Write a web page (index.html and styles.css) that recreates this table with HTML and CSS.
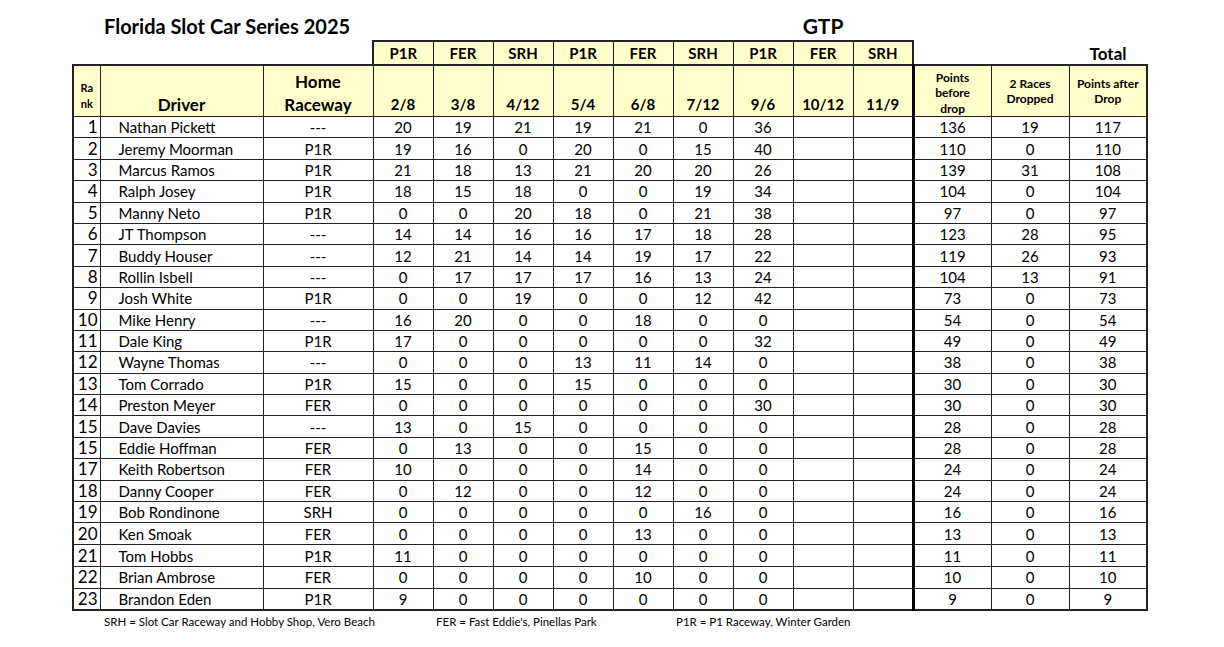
FILE: index.html
```html
<!DOCTYPE html>
<html>
<head>
<meta charset="utf-8">
<title>Florida Slot Car Series 2025</title>
<link rel="stylesheet" href="styles.css">
</head>
<body>
<table class="sheet">
  <colgroup>
    <col class="c-rank"><col class="c-driver"><col class="c-home">
    <col class="c-race"><col class="c-race"><col class="c-race"><col class="c-race"><col class="c-race"><col class="c-race"><col class="c-race"><col class="c-race"><col class="c-race">
    <col class="c-tot"><col class="c-tot"><col class="c-tot">
  </colgroup>
  <tr class="title-row">
    <td></td>
    <td colspan="9" class="title">Florida Slot Car Series 2025</td>
    <td class="gtp">GTP</td>
    <td colspan="4"></td>
  </tr>
  <tr class="track-row">
    <td></td><td></td><td></td>
    <th class="trk first">P1R</th><th class="trk">FER</th><th class="trk">SRH</th><th class="trk">P1R</th><th class="trk">FER</th><th class="trk">SRH</th><th class="trk">P1R</th><th class="trk">FER</th><th class="trk last">SRH</th>
    <td></td><td></td><td class="total">Total</td>
  </tr>
  <tr class="head-row">
    <th class="h rank-h left">Ra<br>nk</th>
    <th class="h driver-h">Driver</th>
    <th class="h home-h">Home<br>Raceway</th>
    <th class="h date">2/8</th><th class="h date">3/8</th><th class="h date">4/12</th><th class="h date">5/4</th><th class="h date">6/8</th><th class="h date">7/12</th><th class="h date">9/6</th><th class="h date">10/12</th><th class="h date sep">11/9</th>
    <th class="h small sepl">Points<br>before<br>drop</th>
    <th class="h small mid">2 Races<br>Dropped</th>
    <th class="h small mid right">Points after<br>Drop</th>
  </tr>
  <tr class="r"><td class="rank left">1</td><td class="name">Nathan Pickett</td><td>---</td><td>20</td><td>19</td><td>21</td><td>19</td><td>21</td><td>0</td><td>36</td><td></td><td class="sep"></td><td class="sepl">136</td><td>19</td><td class="right">117</td></tr>
  <tr class="r"><td class="rank left">2</td><td class="name">Jeremy Moorman</td><td>P1R</td><td>19</td><td>16</td><td>0</td><td>20</td><td>0</td><td>15</td><td>40</td><td></td><td class="sep"></td><td class="sepl">110</td><td>0</td><td class="right">110</td></tr>
  <tr class="r"><td class="rank left">3</td><td class="name">Marcus Ramos</td><td>P1R</td><td>21</td><td>18</td><td>13</td><td>21</td><td>20</td><td>20</td><td>26</td><td></td><td class="sep"></td><td class="sepl">139</td><td>31</td><td class="right">108</td></tr>
  <tr class="r"><td class="rank left">4</td><td class="name">Ralph Josey</td><td>P1R</td><td>18</td><td>15</td><td>18</td><td>0</td><td>0</td><td>19</td><td>34</td><td></td><td class="sep"></td><td class="sepl">104</td><td>0</td><td class="right">104</td></tr>
  <tr class="r"><td class="rank left">5</td><td class="name">Manny Neto</td><td>P1R</td><td>0</td><td>0</td><td>20</td><td>18</td><td>0</td><td>21</td><td>38</td><td></td><td class="sep"></td><td class="sepl">97</td><td>0</td><td class="right">97</td></tr>
  <tr class="r"><td class="rank left">6</td><td class="name">JT Thompson</td><td>---</td><td>14</td><td>14</td><td>16</td><td>16</td><td>17</td><td>18</td><td>28</td><td></td><td class="sep"></td><td class="sepl">123</td><td>28</td><td class="right">95</td></tr>
  <tr class="r"><td class="rank left">7</td><td class="name">Buddy Houser</td><td>---</td><td>12</td><td>21</td><td>14</td><td>14</td><td>19</td><td>17</td><td>22</td><td></td><td class="sep"></td><td class="sepl">119</td><td>26</td><td class="right">93</td></tr>
  <tr class="r"><td class="rank left">8</td><td class="name">Rollin Isbell</td><td>---</td><td>0</td><td>17</td><td>17</td><td>17</td><td>16</td><td>13</td><td>24</td><td></td><td class="sep"></td><td class="sepl">104</td><td>13</td><td class="right">91</td></tr>
  <tr class="r"><td class="rank left">9</td><td class="name">Josh White</td><td>P1R</td><td>0</td><td>0</td><td>19</td><td>0</td><td>0</td><td>12</td><td>42</td><td></td><td class="sep"></td><td class="sepl">73</td><td>0</td><td class="right">73</td></tr>
  <tr class="r"><td class="rank left">10</td><td class="name">Mike Henry</td><td>---</td><td>16</td><td>20</td><td>0</td><td>0</td><td>18</td><td>0</td><td>0</td><td></td><td class="sep"></td><td class="sepl">54</td><td>0</td><td class="right">54</td></tr>
  <tr class="r"><td class="rank left">11</td><td class="name">Dale King</td><td>P1R</td><td>17</td><td>0</td><td>0</td><td>0</td><td>0</td><td>0</td><td>32</td><td></td><td class="sep"></td><td class="sepl">49</td><td>0</td><td class="right">49</td></tr>
  <tr class="r"><td class="rank left">12</td><td class="name">Wayne Thomas</td><td>---</td><td>0</td><td>0</td><td>0</td><td>13</td><td>11</td><td>14</td><td>0</td><td></td><td class="sep"></td><td class="sepl">38</td><td>0</td><td class="right">38</td></tr>
  <tr class="r"><td class="rank left">13</td><td class="name">Tom Corrado</td><td>P1R</td><td>15</td><td>0</td><td>0</td><td>15</td><td>0</td><td>0</td><td>0</td><td></td><td class="sep"></td><td class="sepl">30</td><td>0</td><td class="right">30</td></tr>
  <tr class="r"><td class="rank left">14</td><td class="name">Preston Meyer</td><td>FER</td><td>0</td><td>0</td><td>0</td><td>0</td><td>0</td><td>0</td><td>30</td><td></td><td class="sep"></td><td class="sepl">30</td><td>0</td><td class="right">30</td></tr>
  <tr class="r"><td class="rank left">15</td><td class="name">Dave Davies</td><td>---</td><td>13</td><td>0</td><td>15</td><td>0</td><td>0</td><td>0</td><td>0</td><td></td><td class="sep"></td><td class="sepl">28</td><td>0</td><td class="right">28</td></tr>
  <tr class="r"><td class="rank left">15</td><td class="name">Eddie Hoffman</td><td>FER</td><td>0</td><td>13</td><td>0</td><td>0</td><td>15</td><td>0</td><td>0</td><td></td><td class="sep"></td><td class="sepl">28</td><td>0</td><td class="right">28</td></tr>
  <tr class="r"><td class="rank left">17</td><td class="name">Keith Robertson</td><td>FER</td><td>10</td><td>0</td><td>0</td><td>0</td><td>14</td><td>0</td><td>0</td><td></td><td class="sep"></td><td class="sepl">24</td><td>0</td><td class="right">24</td></tr>
  <tr class="r"><td class="rank left">18</td><td class="name">Danny Cooper</td><td>FER</td><td>0</td><td>12</td><td>0</td><td>0</td><td>12</td><td>0</td><td>0</td><td></td><td class="sep"></td><td class="sepl">24</td><td>0</td><td class="right">24</td></tr>
  <tr class="r"><td class="rank left">19</td><td class="name">Bob Rondinone</td><td>SRH</td><td>0</td><td>0</td><td>0</td><td>0</td><td>0</td><td>16</td><td>0</td><td></td><td class="sep"></td><td class="sepl">16</td><td>0</td><td class="right">16</td></tr>
  <tr class="r"><td class="rank left">20</td><td class="name">Ken Smoak</td><td>FER</td><td>0</td><td>0</td><td>0</td><td>0</td><td>13</td><td>0</td><td>0</td><td></td><td class="sep"></td><td class="sepl">13</td><td>0</td><td class="right">13</td></tr>
  <tr class="r tall"><td class="rank left">21</td><td class="name">Tom Hobbs</td><td>P1R</td><td>11</td><td>0</td><td>0</td><td>0</td><td>0</td><td>0</td><td>0</td><td></td><td class="sep"></td><td class="sepl">11</td><td>0</td><td class="right">11</td></tr>
  <tr class="r"><td class="rank left">22</td><td class="name">Brian Ambrose</td><td>FER</td><td>0</td><td>0</td><td>0</td><td>0</td><td>10</td><td>0</td><td>0</td><td></td><td class="sep"></td><td class="sepl">10</td><td>0</td><td class="right">10</td></tr>
  <tr class="r last-row"><td class="rank left">23</td><td class="name">Brandon Eden</td><td>P1R</td><td>9</td><td>0</td><td>0</td><td>0</td><td>0</td><td>0</td><td>0</td><td></td><td class="sep"></td><td class="sepl">9</td><td>0</td><td class="right">9</td></tr>
  <tr class="foot-row">
    <td></td>
    <td colspan="3" class="note first-note">SRH = Slot Car Raceway and Hobby Shop, Vero Beach</td>
    <td colspan="4" class="note">FER = Fast Eddie's, Pinellas Park</td>
    <td colspan="7" class="note">P1R = P1 Raceway, Winter Garden</td>
  </tr>
</table>
</body>
</html>
```
FILE: styles.css
```css
html, body {
  margin: 0;
  padding: 0;
  background: #ffffff;
}

body {
  font-family: Lato, "Liberation Sans", sans-serif;
  color: #000000;
}

.sheet {
  border-collapse: collapse;
  table-layout: fixed;
  width: 1074px;
  margin-left: 72px;
}

.c-rank { width: 27px; }
.c-driver { width: 163px; }
.c-home { width: 110px; }
.c-race { width: 60px; }
.c-tot { width: 78px; }

.sheet td,
.sheet th {
  padding: 0;
  text-align: center;
  white-space: nowrap;
  line-height: 1;
}

/* ---------- title row ---------- */
.title-row td {
  height: 36px;
  vertical-align: bottom;
  padding-bottom: 4px;
}
.sheet .title-row .title {
  text-align: left;
  font-weight: 700;
  font-size: 20px;
  padding-left: 4px;
}
.sheet .title-row .gtp {
  font-weight: 700;
  font-size: 21px;
}

/* ---------- track row ---------- */
.track-row td,
.track-row th {
  height: 21px;
}
.sheet .trk {
  background: #ffffcc;
  border: 1px solid #222;
  border-top: 2px solid #222;
  font-weight: 700;
  font-size: 15px;
}
.sheet .trk.first { border-left: 2px solid #222; }
.sheet .trk.last { border-right: 2px solid #222; }
.sheet .track-row .total {
  font-weight: 700;
  font-size: 17px;
  vertical-align: bottom;
  padding-bottom: 2px;
}

/* ---------- head row ---------- */
.sheet .head-row th {
  height: 46px;
  background: #ffffcc;
  border: 1px solid #222;
  border-top: 2px solid #222;
  font-weight: 700;
  vertical-align: bottom;
}
.sheet .head-row .rank-h {
  font-size: 11px;
  line-height: 16px;
  padding-bottom: 4px;
}
.sheet .head-row .driver-h {
  font-size: 17px;
  padding-bottom: 3px;
}
.sheet .head-row .home-h {
  font-size: 17px;
  line-height: 23px;
}
.sheet .head-row .date {
  font-size: 15px;
  padding-bottom: 4px;
}
.sheet .head-row .small {
  font-size: 12px;
  line-height: 15.5px;
  padding-bottom: 0;
}
.sheet .head-row .small.mid {
  vertical-align: middle;
}

/* ---------- data rows ---------- */
.sheet .r td {
  height: 20.4px;
  border: 1px solid #222;
  font-size: 15px;
  line-height: 16px;
}
.sheet .r.tall td {
  height: 21.4px;
}
.sheet .r .rank {
  text-align: right;
  font-size: 17px;
  padding-right: 2px;
}
.sheet .r .name {
  text-align: left;
  padding-left: 18px;
}

.sheet td.left,
.sheet th.left { border-left: 2px solid #222; }
.sheet td.right,
.sheet th.right { border-right: 2px solid #222; }
.sheet td.sep,
.sheet th.sep { border-right: 3px solid #000; }
.sheet td.sepl,
.sheet th.sepl { border-left: 3px solid #000; }
.sheet .r.last-row td { border-bottom: 2px solid #222; }

/* ---------- footer ---------- */
.foot-row td {
  height: 22px;
  vertical-align: middle;
}
.sheet .foot-row .note {
  text-align: left;
  font-size: 11.5px;
  padding-left: 3px;
}
.sheet .foot-row .first-note {
  padding-left: 4px;
}
```
